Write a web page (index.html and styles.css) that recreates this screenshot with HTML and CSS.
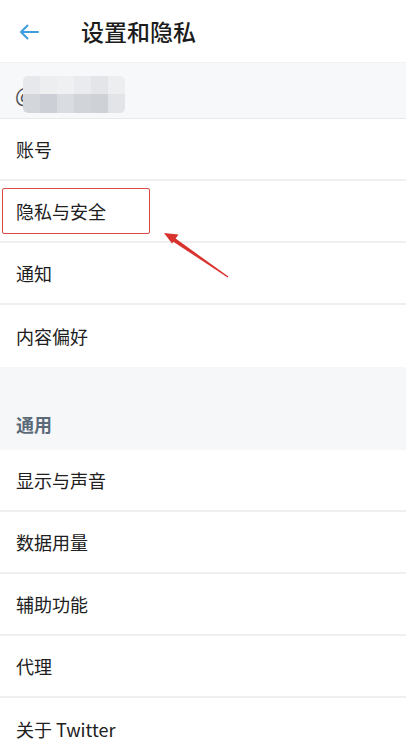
FILE: index.html
```html
<!DOCTYPE html>
<html lang="zh-CN">
<head>
    <meta charset="UTF-8">
    <meta name="viewport" content="width=device-width, initial-scale=1.0">
    <title>设置和隐私</title>
    <link rel="stylesheet" href="styles.css">
</head>
<body>
    <header class="top-bar">
        <svg class="back-icon" viewBox="0 0 20 16" width="20" height="16">
            <path d="M19 8H2M8.5 1.5L2 8l6.5 6.5" fill="none" stroke="#3d9de0" stroke-width="2" stroke-linecap="round" stroke-linejoin="round"/>
        </svg>
        <h1>设置和隐私</h1>
    </header>

    <section class="account-band">
        <span class="at">@</span>
        <div class="blur">
            <i style="background:#e6e8eb"></i><i style="background:#eceef0"></i><i style="background:#eef0f2"></i><i style="background:#e9ebee"></i><i style="background:#e3e5e8"></i><i style="background:#eceef0"></i>
            <i style="background:#d3d6db"></i><i style="background:#ccd0d6"></i><i style="background:#d9dce1"></i><i style="background:#d1d5da"></i><i style="background:#ced2d7"></i><i style="background:#e2e4e7"></i>
        </div>
    </section>

    <ul class="menu">
        <li>账号</li>
        <li class="marked"><span class="mark-box"></span>隐私与安全</li>
        <li>通知</li>
        <li>内容偏好</li>
    </ul>

    <section class="group-title">通用</section>

    <ul class="menu">
        <li>显示与声音</li>
        <li>数据用量</li>
        <li>辅助功能</li>
        <li>代理</li>
        <li>关于 Twitter</li>
    </ul>

    <svg class="pointer" viewBox="0 0 406 754" width="406" height="754">
        <path d="M228.4 276.6 L227.6 277.4 L171 240.2 L173.2 236.8 Z" fill="#d8332f"/>
        <path d="M164 233 L178.5 234.5 L172 243.5 Z" fill="#d8332f"/>
    </svg>
</body>
</html>
```

FILE: styles.css
```css
body {
    margin: 0;
    font-family: "Noto Sans CJK SC", "Noto Sans", sans-serif;
    background: #ffffff;
    color: #202020;
    width: 406px;
    height: 754px;
    overflow: hidden;
    position: relative;
}
.top-bar {
    height: 62px;
    display: flex;
    align-items: center;
    padding-left: 19px;
    box-sizing: border-box;
}
.back-icon {
    margin-top: 1px;
}
.top-bar h1 {
    margin: 0 0 0 42px;
    font-size: 23px;
    font-weight: 500;
    color: #1c1c1c;
}
.account-band {
    height: 57px;
    background: #f7f8f9;
    border-top: 1px solid #f0f1f2;
    border-bottom: 1px solid #e8e9eb;
    box-sizing: border-box;
    display: flex;
    align-items: center;
    padding-left: 15px;
}
.at {
    font-size: 21px;
    color: #4d5258;
    margin-top: 6px;
}
.blur {
    display: grid;
    grid-template-columns: repeat(6, 17px);
    grid-template-rows: 18px 19px;
    margin-left: -12px;
    margin-top: 8px;
    border-radius: 5px;
    overflow: hidden;
    position: relative;
}
.menu {
    list-style: none;
    margin: 0;
    padding: 0;
}
.menu li {
    height: 62px;
    box-sizing: border-box;
    border-bottom: 2px solid #efefef;
    display: flex;
    align-items: center;
    padding-left: 16px;
    font-size: 18px;
    position: relative;
}
.menu li:last-child {
    border-bottom: none;
}
.mark-box {
    position: absolute;
    left: 2px;
    top: 7px;
    width: 148px;
    height: 46px;
    border: 1.5px solid #d94a47;
    border-radius: 2px;
    box-sizing: border-box;
}
.group-title {
    height: 83px;
    background: #f6f7f9;
    box-sizing: border-box;
    display: flex;
    align-items: flex-end;
    padding: 0 0 13px 16px;
    font-size: 18px;
    font-weight: 700;
    color: #5b6a79;
}
.pointer {
    position: absolute;
    left: 0;
    top: 0;
    pointer-events: none;
}
```
